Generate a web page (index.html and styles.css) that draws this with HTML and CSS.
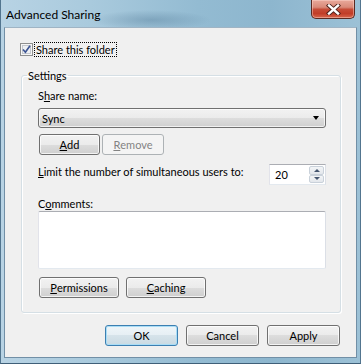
FILE: index.html
```html
<!DOCTYPE html>
<html>
<head>
<meta charset="utf-8">
<link rel="stylesheet" href="styles.css">
</head>
<body>
<div class="window">
  <div class="titlebar">
    <span class="title">Advanced Sharing</span>
    <div class="close">
      <svg width="17" height="11" viewBox="0 0 17 11">
        <path d="M4 1.5 L13 9.5 M13 1.5 L4 9.5" stroke="#4a1f18" stroke-width="4.2" stroke-linecap="square" fill="none"/>
        <path d="M4 1.5 L13 9.5 M13 1.5 L4 9.5" stroke="#ffffff" stroke-width="2.4" stroke-linecap="square" fill="none"/>
      </svg>
    </div>
  </div>
  <div class="client">
    <div class="share-row">
      <span class="checkbox">
        <svg width="13" height="13" viewBox="0 0 13 13">
          <rect x="0.5" y="0.5" width="12" height="12" fill="#f6f6f6" stroke="#8e8f8f"/>
          <rect x="2.5" y="2.5" width="8" height="8" fill="#eef0f3" stroke="#c3c7cd"/>
          <path d="M3 6.5 L5.4 9.2 L10 2.8" stroke="#3c5493" stroke-width="1.7" fill="none"/>
        </svg>
      </span>
      <span class="focus">Share this folder</span>
    </div>
    <fieldset class="group">
      <legend>Settings</legend>
      <div class="lbl">S<u>h</u>are name:</div>
      <div class="combo"><span>Sync</span><span class="arrow"></span></div>
      <div class="row btn-row1">
        <div class="btn btn-add"><u>A</u>dd</div>
        <div class="btn btn-remove disabled"><u>R</u>emove</div>
      </div>
      <div class="limit-row">
        <span class="lbl"><u>L</u>imit the number of simultaneous users to:</span>
        <div class="spin">
          <span class="val">20</span>
          <div class="spin-btns">
            <span class="sb up"><span class="tri-up"></span></span>
            <span class="sb down"><span class="tri-down"></span></span>
          </div>
        </div>
      </div>
      <div class="lbl comments-lbl">C<u>o</u>mments:</div>
      <div class="textarea"></div>
      <div class="row btn-row2">
        <div class="btn btn-wide"><u>P</u>ermissions</div>
        <div class="btn btn-wide"><u>C</u>aching</div>
      </div>
    </fieldset>
    <div class="dialog-btns">
      <div class="btn dbtn default">OK</div>
      <div class="btn dbtn">Cancel</div>
      <div class="btn dbtn">Apply</div>
    </div>
  </div>
</div>
</body>
</html>
```
FILE: styles.css
```css
html, body {
  margin: 0;
  padding: 0;
  background: #8fb5cd;
}
body {
  font-family: "Lato", "Open Sans", sans-serif;
  font-size: 11px;
  color: #000;
}
.window {
  width: 361px;
  height: 364px;
  box-sizing: border-box;
  padding: 0 3px 5px 3px;
  border-left: 1px solid #52758f;
  border-right: 1px solid #52758f;
  border-bottom: 1px solid #3f5f78;
  display: flex;
  flex-direction: column;
  background:
    radial-gradient(ellipse 60px 10px at 150px 20px, rgba(70,110,140,0.35), rgba(70,110,140,0) 100%),
    linear-gradient(to right, #b8d3e4 0%, #a9cadd 25%, #93bbd2 55%, #8db6ce 75%, #9cc1d6 100%);
}
.titlebar {
  height: 27px;
  flex: none;
  display: flex;
  align-items: flex-start;
}
.title {
  padding: 7px 0 0 2px;
  line-height: 15px;
  font-size: 12px;
  color: #000;
}
.close {
  margin-left: auto;
  margin-right: 2px;
  width: 44px;
  height: 19px;
  box-sizing: border-box;
  border: 1px solid #5a2a22;
  border-top: none;
  border-radius: 0 0 5px 5px;
  background: linear-gradient(to bottom, #e9a99b 0%, #d98a79 40%, #c64c37 52%, #c13d28 75%, #d7664c 100%);
  box-shadow: inset 0 0 0 1px rgba(255,220,210,0.45);
  display: flex;
  align-items: center;
  justify-content: center;
}
.close svg { display: block; }
.client {
  flex: 1;
  border: 1px solid #718fa6;
  border-top-color: #9fb4c4;
  background: #f0f0f0;
  padding: 14px 16px 0 15px;
  display: flex;
  flex-direction: column;
}
.share-row {
  display: flex;
  align-items: center;
  height: 15px;
}
.checkbox {
  width: 13px;
  height: 13px;
  margin-right: 1px;
}
.checkbox svg { display: block; }
.focus {
  border: 1px dotted #000;
  line-height: 13px;
  padding: 0 1px;
}
.group {
  margin: 11px 0 0 1px;
  width: 320px;
  box-sizing: border-box;
  border: 1px solid #d5dfe5;
  border-radius: 3px;
  padding: 5px 13px 14px 16px;
  box-shadow: inset 1px 1px 0 #fff, 1px 1px 0 #fff;
}
.group legend {
  margin-left: -11px;
  padding: 0 1px;
  line-height: 15px;
}
.lbl {
  line-height: 15px;
}
.combo {
  margin-top: 5px;
  width: 288px;
  height: 20px;
  box-sizing: border-box;
  border: 1px solid #707070;
  border-radius: 3px;
  background: linear-gradient(to bottom, #f2f2f2 0%, #ebebeb 50%, #dddddd 50%, #cfcfcf 100%);
  box-shadow: inset 0 0 0 1px rgba(255,255,255,0.7);
  display: flex;
  align-items: center;
  padding: 0 6px 0 3px;
  line-height: 15px;
}
.combo .arrow {
  margin-left: auto;
  width: 0;
  height: 0;
  border-left: 3.5px solid transparent;
  border-right: 3.5px solid transparent;
  border-top: 4px solid #000;
}
.row {
  display: flex;
  margin-left: 1px;
}
.btn-row1 {
  margin-top: 6px;
  gap: 2px;
}
.btn {
  height: 21px;
  box-sizing: border-box;
  border: 1px solid #707070;
  border-radius: 3px;
  background: linear-gradient(to bottom, #f2f2f2 0%, #ebebeb 50%, #dddddd 50%, #cfcfcf 100%);
  box-shadow: inset 0 0 0 1px rgba(255,255,255,0.75);
  display: flex;
  align-items: center;
  justify-content: center;
  line-height: 15px;
}
.btn-add { width: 61px; }
.btn-remove { width: 62px; }
.btn.disabled {
  border-color: #adb2b5;
  background: #f4f4f4;
  box-shadow: none;
  color: #838383;
}
.limit-row {
  margin-top: 9px;
  display: flex;
  align-items: flex-start;
  height: 21px;
}
.spin {
  margin-left: auto;
  margin-right: 1px;
  width: 57px;
  height: 21px;
  box-sizing: border-box;
  border: 1px solid #abadb3;
  border-left-color: #e2e3ea;
  border-right-color: #dbdfe6;
  border-bottom-color: #e3e9ef;
  background: #fff;
  display: flex;
  align-items: center;
  padding: 0 1px 0 5px;
}
.spin .val { line-height: 15px; }
.spin-btns {
  margin-left: auto;
  width: 15px;
  height: 17px;
  display: flex;
  flex-direction: column;
}
.sb {
  flex: 1;
  box-sizing: border-box;
  border: 1px solid #c9d1da;
  border-radius: 2px;
  background: linear-gradient(to bottom, #f3f5f7, #e3e7ec);
  display: flex;
  align-items: center;
  justify-content: center;
}
.tri-up {
  width: 0; height: 0;
  border-left: 3px solid transparent;
  border-right: 3px solid transparent;
  border-bottom: 3px solid #44556f;
}
.tri-down {
  width: 0; height: 0;
  border-left: 3px solid transparent;
  border-right: 3px solid transparent;
  border-top: 3px solid #44556f;
}
.comments-lbl {
  margin-top: 12px;
  line-height: 14px;
}
.textarea {
  width: 288px;
  height: 58px;
  box-sizing: border-box;
  border: 1px solid #abadb3;
  border-left-color: #e2e3ea;
  border-right-color: #dbdfe6;
  border-bottom-color: #e3e9ef;
  border-radius: 2px;
  background: #fff;
}
.btn-row2 {
  margin-top: 8px;
  gap: 7px;
}
.btn-wide { width: 80px; }
.dialog-btns {
  margin-top: 12px;
  display: flex;
  justify-content: flex-end;
  gap: 8px;
}
.dbtn { width: 73px; }
.btn.default {
  border-color: #3c7fb1;
  box-shadow: inset 0 0 0 1px #a9ddf6;
  background: linear-gradient(to bottom, #eef5f9 0%, #e6eff4 50%, #d6e3ea 50%, #c9dae3 100%);
}
u { text-decoration: underline; text-underline-offset: 1px; }
```
